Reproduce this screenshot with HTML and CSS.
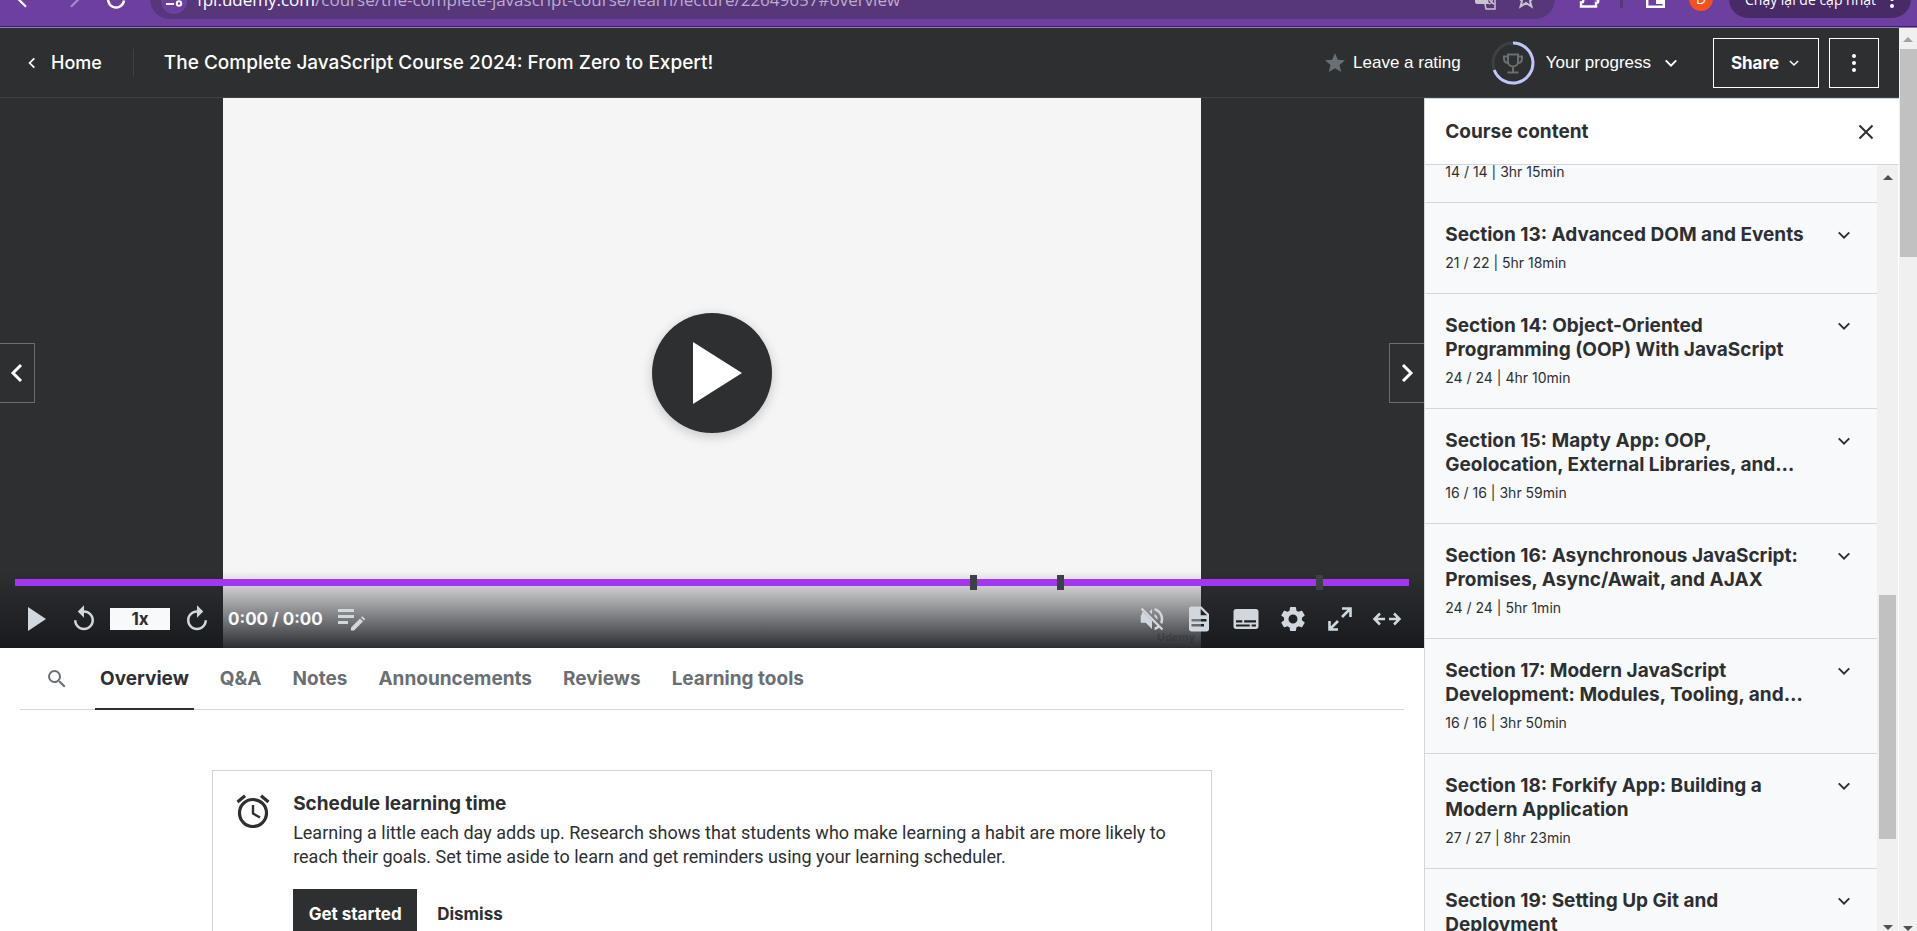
FILE: index.html
```html
<!DOCTYPE html>
<html lang="en">
<head>
<meta charset="utf-8">
<title>The Complete JavaScript Course 2024: From Zero to Expert!</title>
<link rel="stylesheet" href="styles.css">
</head>
<body>
<svg class="sprite" aria-hidden="true">
  <symbol id="chevron-down" viewBox="0 0 24 24"><path d="M5 8.5l7 7 7-7" fill="none" stroke="currentColor" stroke-width="2.6"/></symbol>
  <symbol id="chevron-left" viewBox="0 0 24 24"><path d="M16 4l-8 8 8 8" fill="none" stroke="currentColor" stroke-width="3"/></symbol>
  <symbol id="chevron-right" viewBox="0 0 24 24"><path d="M8 4l8 8-8 8" fill="none" stroke="currentColor" stroke-width="3"/></symbol>
  <symbol id="arrow-back" viewBox="0 0 24 24"><path d="M21 12H4M12 3.500l-8.500 8.500 8.500 8.500" fill="none" stroke="currentColor" stroke-width="2.400"/></symbol>
  <symbol id="star" viewBox="0 0 24 24"><path d="M12 17.270L18.180 21l-1.640-7.030L22 9.240l-7.190-.61L12 2 9.190 8.630 2 9.240l5.460 4.730L5.820 21z" fill="currentColor"/></symbol>
  <symbol id="replay" viewBox="0 0 24 24"><path d="M12 5V1L7 6l5 5V7c3.310 0 6 2.690 6 6s-2.690 6-6 6-6-2.690-6-6H4c0 4.420 3.580 8 8 8s8-3.580 8-8-3.580-8-8-8z" fill="currentColor"/></symbol>
</svg>

<header class="browser">
  <div class="toolbar">
    <button class="tool" aria-label="Back"><svg class="i22"><use href="#arrow-back"/></svg></button>
    <button class="tool tool-forward" aria-label="Forward"><svg class="i22 flip"><use href="#arrow-back"/></svg></button>
    <button class="tool" aria-label="Reload"><svg class="i22" viewBox="0 0 22 22"><path d="M18 7.500A8 8 0 1 0 19 12.500M19 2v6h-6" fill="none" stroke="currentColor" stroke-width="2.400"/></svg></button>
    <div class="omnibox">
      <button class="site" aria-label="Site information"><svg class="i18" viewBox="0 0 18 18"><g fill="none" stroke="currentColor" stroke-width="2"><circle cx="4" cy="5" r="2"/><path d="M8 5h9M1 14h8"/><circle cx="14" cy="13.500" r="2.200"/></g></svg></button>
      <span class="url"><b>fpi.udemy.com</b>/course/the-complete-javascript-course/learn/lecture/22649657#overview</span>
      <svg class="i22 mark" viewBox="0 0 22 22"><path d="M0 1h11l3 15H2a2 2 0 0 1-2-2z" fill="currentColor"/><path d="M12 5h8v16h-9l-1-5M13 9h6M14 9c0 4 3 6 5 7M18 9c0 3-2 6-4 7" fill="none" stroke="currentColor" stroke-width="1.500"/></svg>
      <svg class="i22 mark" viewBox="0 0 22 22"><path d="M5.500 18.500L7 13 2.500 9l6-.5L11 3l2.500 5.500 6 .5L15 13l1.500 5.500L11 15z" fill="none" stroke="currentColor" stroke-width="2"/></svg>
    </div>
    <button class="tool ext" aria-label="Extensions"><svg class="i22" viewBox="0 0 22 22"><path d="M3 18.500v-4c3 0 3-4 0-4V6h5c0-4 5-4 5 0h5v5c3 0 3 4 0 4v3.500z" fill="none" stroke="currentColor" stroke-width="2.400"/></svg></button>
    <span class="sep"></span>
    <button class="tool panel-tool" aria-label="Side panel"><svg class="i22" viewBox="0 0 22 22"><path d="M2.200 3.200h16.600v15.600H2.200z" fill="none" stroke="currentColor" stroke-width="2.400"/><path d="M11 3h8v13h-8z" fill="currentColor"/></svg></button>
    <span class="avatar">D</span>
    <button class="update"><span>Chạy lại để cập nhật</span><svg class="dots" viewBox="0 0 4 18"><g fill="currentColor"><circle cx="2" cy="2" r="2"/><circle cx="2" cy="9" r="2"/><circle cx="2" cy="16" r="2"/></g></svg></button>
  </div>
</header>

<div class="window">
  <div class="page">
    <header class="topbar">
      <a class="home" href="#"><svg class="i14"><use href="#chevron-left"/></svg>Home</a>
      <h1 class="course">The Complete JavaScript Course 2024: From Zero to Expert!</h1>
      <button class="rating"><svg class="i24"><use href="#star"/></svg>Leave a rating</button>
      <button class="progress">
        <svg class="ring" viewBox="0 0 44 44"><circle cx="22" cy="22" r="20" fill="none" stroke="#3e4143" stroke-width="3"/><path d="M22 2A20 20 0 1 1 3.200 29" fill="none" stroke="#c0c4fc" stroke-width="3"/><g fill="none" stroke="#6a6f73" stroke-width="2"><path d="M17 13.500h10v7a5 5 0 0 1-10 0zM17 15.500h-4v2c0 3 2 4.500 4.500 4.500M27 15.500h4v2c0 3-2 4.500-4.500 4.500M22 25.500V31M16.500 31.500h11"/></g></svg>
        Your progress
        <svg class="i18"><use href="#chevron-down"/></svg>
      </button>
      <button class="outlined share">Share<svg class="i14"><use href="#chevron-down"/></svg></button>
      <button class="outlined more" aria-label="More options"><svg class="dots" viewBox="0 0 4 18"><g fill="currentColor"><circle cx="2" cy="2" r="2"/><circle cx="2" cy="9" r="2"/><circle cx="2" cy="16" r="2"/></g></svg></button>
    </header>

    <div class="columns">
      <main class="content">
        <section class="video" aria-label="Video player">
          <div class="poster"><span class="watermark">Udemy</span></div>
          <button class="nav nav-prev" aria-label="Previous lecture"><svg class="i24"><use href="#chevron-left"/></svg></button>
          <button class="nav nav-next" aria-label="Next lecture"><svg class="i24"><use href="#chevron-right"/></svg></button>
          <button class="play-large" aria-label="Play video"><svg viewBox="0 0 120 120"><path d="M41 29l49 31-49 31z" fill="#fff"/></svg></button>
          <div class="player">
            <div class="track">
              <span class="cue" style="left:68.800%"></span>
              <span class="cue" style="left:75%"></span>
              <span class="cue" style="left:93.600%"></span>
            </div>
            <div class="controls">
              <button class="ctl" aria-label="Play"><svg class="i30" viewBox="0 0 30 30"><path d="M6 3l18 12L6 27z" fill="currentColor"/></svg></button>
              <button class="ctl" aria-label="Rewind"><svg class="i30"><use href="#replay"/></svg></button>
              <button class="speed">1x</button>
              <button class="ctl" aria-label="Forward"><svg class="i30 flip"><use href="#replay"/></svg></button>
              <span class="time">0:00 / 0:00</span>
              <button class="ctl" aria-label="Add note"><svg class="i30" viewBox="0 0 30 30"><path d="M2 5h16v3H2zM2 11h16v3H2zM2 17h10v3H2z" fill="currentColor"/><path d="M15 23.500L24 14.500l3 3-9 9h-3zM25 13.500l1.300-1.300 3 3L28 16.500z" fill="currentColor"/></svg></button>
              <span class="spacer"></span>
              <button class="ctl" aria-label="Unmute"><svg class="i30" viewBox="0 0 24 24"><path d="M3 9v6h4l5 5v-6.600L4.300 5.700 3.600 9zM12 4L9.900 6.100 12 8.200zM16.500 12A4.500 4.500 0 0 0 14 7.970v2.210l2.450 2.450c.03-.2.05-.41.05-.63zM19 12c0 .94-.2 1.820-.54 2.640l1.510 1.510A8.800 8.800 0 0 0 21 12c0-4.280-2.990-7.860-7-8.770v2.060c2.890.86 5 3.540 5 6.710zM4.270 3L3 4.270l13.250 13.250c-.67.52-1.420.93-2.250 1.180v2.060a9 9 0 0 0 3.690-1.810L19.730 21 21 19.730z" fill="currentColor"/></svg></button>
              <button class="ctl" aria-label="Transcript"><svg class="i30" viewBox="0 0 24 24"><path d="M14 2H6c-1.100 0-2 .9-2 2v16c0 1.100.9 2 2 2h12c1.100 0 2-.9 2-2V8zm2 16H6v-2h10zm2-4H6v-2h12zm-5-5V3.500L18.500 9z" fill="currentColor"/></svg></button>
              <button class="ctl" aria-label="Captions"><svg class="i30" viewBox="0 0 24 24"><path d="M20 4H4c-1.100 0-2 .9-2 2v12c0 1.100.9 2 2 2h16c1.100 0 2-.9 2-2V6c0-1.100-.9-2-2-2zM4 13h5v1.700H4zm11 5H4v-1.700h11zm5 0h-3.500v-1.700H20zm0-3.300h-9.500V13H20z" fill="currentColor"/></svg></button>
              <button class="ctl" aria-label="Settings"><svg class="i30" viewBox="0 0 24 24"><path d="M19.140 12.940c.04-.3.06-.61.06-.94 0-.32-.02-.64-.07-.94l2.030-1.580a.49.49 0 0 0 .12-.61l-1.920-3.320a.49.49 0 0 0-.59-.22l-2.390.96a7 7 0 0 0-1.620-.94l-.36-2.540A.48.48 0 0 0 13.920 2.400h-3.840a.47.47 0 0 0-.47.41l-.36 2.540c-.59.24-1.130.57-1.620.94l-2.390-.96a.48.48 0 0 0-.59.22L2.740 8.870a.47.47 0 0 0 .12.61l2.030 1.580c-.05.3-.09.63-.09.94s.02.64.07.94l-2.030 1.580a.49.49 0 0 0-.12.61l1.920 3.320c.12.22.37.29.59.22l2.390-.96c.5.38 1.030.7 1.620.94l.36 2.540c.05.24.24.41.48.41h3.840c.24 0 .44-.17.47-.41l.36-2.540c.59-.24 1.130-.56 1.620-.94l2.390.96c.22.080.47 0 .59-.22l1.920-3.320a.47.47 0 0 0-.12-.61zM12 15.600a3.600 3.600 0 1 1 0-7.200 3.600 3.600 0 0 1 0 7.200z" fill="currentColor"/></svg></button>
              <button class="ctl" aria-label="Full screen"><svg class="i30" viewBox="0 0 30 30"><path d="M17 4.500h8.500V13M25 5l-8 8M4.500 17v8.500H13M5 25l8-8" fill="none" stroke="currentColor" stroke-width="2.600"/></svg></button>
              <button class="ctl" aria-label="Expanded view"><svg class="i30" viewBox="0 0 30 30"><path d="M13 15H3.500M8 9.500L2.500 15 8 20.500M17 15h9.500M22 9.500l5.500 5.500-5.500 5.500" fill="none" stroke="currentColor" stroke-width="2.500"/></svg></button>
            </div>
          </div>
        </section>

        <nav class="tabs">
          <button class="search" aria-label="Search"><svg class="i24" viewBox="0 0 24 24"><path d="M15.500 14h-.79l-.28-.27A6.470 6.470 0 0 0 16 9.500 6.500 6.500 0 1 0 9.500 16c1.610 0 3.090-.59 4.230-1.570l.27.28v.79l5 4.990L20.490 19zm-6 0a4.500 4.500 0 1 1 0-9 4.500 4.500 0 0 1 0 9z" fill="currentColor"/></svg></button>
          <a class="tab tab-on" href="#overview">Overview</a>
          <a class="tab" href="#qa">Q&amp;A</a>
          <a class="tab" href="#notes">Notes</a>
          <a class="tab" href="#announcements">Announcements</a>
          <a class="tab" href="#reviews">Reviews</a>
          <a class="tab" href="#tools">Learning tools</a>
        </nav>

        <section class="card">
          <svg class="alarm" viewBox="0 0 34 34"><g fill="none" stroke="currentColor"><circle cx="17" cy="19" r="13.500" stroke-width="3.200"/><path d="M17 11v8.500l7 4" stroke-width="2.400"/><path d="M1.500 8L9 1.800M32.500 8L25 1.800" stroke-width="3.200"/></g></svg>
          <div class="card-body">
            <h2 class="card-title">Schedule learning time</h2>
            <p class="card-text">Learning a little each day adds up. Research shows that students who make learning a habit are more likely to reach their goals. Set time aside to learn and get reminders using your learning scheduler.</p>
            <div class="actions">
              <button class="primary">Get started</button>
              <button class="ghost">Dismiss</button>
            </div>
          </div>
        </section>
      </main>

      <aside class="sidebar">
        <div class="side-head">
          <h2 class="side-title">Course content</h2>
          <button class="close" aria-label="Close"><svg class="i16" viewBox="0 0 16 16"><path d="M1.500 1.500l13 13M14.500 1.500l-13 13" fill="none" stroke="currentColor" stroke-width="2"/></svg></button>
        </div>
        <div class="side-body">
          <div class="list">
            <div class="item item-cut"><p class="meta">14 / 14 | 3hr 15min</p></div>
            <div class="item"><div class="row"><h3 class="name">Section 13: Advanced DOM and Events</h3><button class="toggle" aria-label="Expand section 13"><svg class="i18"><use href="#chevron-down"/></svg></button></div><p class="meta">21 / 22 | 5hr 18min</p></div>
            <div class="item"><div class="row"><h3 class="name">Section 14: Object-Oriented<br>Programming (OOP) With JavaScript</h3><button class="toggle" aria-label="Expand section 14"><svg class="i18"><use href="#chevron-down"/></svg></button></div><p class="meta">24 / 24 | 4hr 10min</p></div>
            <div class="item"><div class="row"><h3 class="name">Section 15: Mapty App: OOP,<br>Geolocation, External Libraries, and…</h3><button class="toggle" aria-label="Expand section 15"><svg class="i18"><use href="#chevron-down"/></svg></button></div><p class="meta">16 / 16 | 3hr 59min</p></div>
            <div class="item"><div class="row"><h3 class="name">Section 16: Asynchronous JavaScript:<br>Promises, Async/Await, and AJAX</h3><button class="toggle" aria-label="Expand section 16"><svg class="i18"><use href="#chevron-down"/></svg></button></div><p class="meta">24 / 24 | 5hr 1min</p></div>
            <div class="item"><div class="row"><h3 class="name">Section 17: Modern JavaScript<br>Development: Modules, Tooling, and…</h3><button class="toggle" aria-label="Expand section 17"><svg class="i18"><use href="#chevron-down"/></svg></button></div><p class="meta">16 / 16 | 3hr 50min</p></div>
            <div class="item"><div class="row"><h3 class="name">Section 18: Forkify App: Building a<br>Modern Application</h3><button class="toggle" aria-label="Expand section 18"><svg class="i18"><use href="#chevron-down"/></svg></button></div><p class="meta">27 / 27 | 8hr 23min</p></div>
            <div class="item"><div class="row"><h3 class="name">Section 19: Setting Up Git and<br>Deployment</h3><button class="toggle" aria-label="Expand section 19"><svg class="i18"><use href="#chevron-down"/></svg></button></div></div>
          </div>
          <div class="scroll scroll-side"><i class="up"></i><span class="thumb"></span><i class="down"></i></div>
        </div>
      </aside>
    </div>
  </div>
  <div class="scroll scroll-page"><i class="up"></i><span class="thumb"></span><i class="down"></i></div>
</div>
</body>
</html>
```

FILE: styles.css
```css
* { box-sizing: border-box; }
body {
  margin: 0;
  height: 100vh;
  overflow: hidden;
  display: flex;
  flex-direction: column;
  background: #fff;
  color: #2d2f31;
  font-family: Inter, "Liberation Sans", sans-serif;
  font-size: 17px;
}
button {
  font: inherit;
  color: inherit;
  background: none;
  border: 0;
  padding: 0;
  display: flex;
  align-items: center;
  justify-content: center;
}
h1, h2, h3, p { margin: 0; }
a { color: inherit; text-decoration: none; }
svg { display: block; flex: none; }
.sprite { position: absolute; width: 0; height: 0; }
.i14 { width: 14px; height: 14px; }
.i16 { width: 16px; height: 16px; }
.i18 { width: 18px; height: 18px; }
.i22 { width: 22px; height: 22px; }
.i24 { width: 24px; height: 24px; }
.i30 { width: 30px; height: 30px; }
.flip { transform: scaleX(-1); }
.dots { width: 4px; height: 18px; }

/* Browser toolbar, scrolled partly out of view */
.browser {
  flex: none;
  height: 28px;
  overflow: hidden;
  background: #6d40a0;
  border-bottom: 1px solid #9a72c8;
  box-shadow: inset 0 -1px #3c2359;
  font-family: "Open Sans", "Noto Sans", sans-serif;
}
.toolbar {
  display: flex;
  align-items: center;
  height: 40px;
  margin-top: -21px;
  padding: 0 6px 0 15px;
  color: #fff;
}
.tool { width: 22px; margin-right: 23px; }
.tool-forward { color: #a88bc8; }
.omnibox {
  flex: 1;
  display: flex;
  align-items: center;
  gap: 10px;
  height: 40px;
  margin-right: 23px;
  padding: 0 18px 0 11px;
  border-radius: 20px;
  background: #573779;
}
.mark { color: #c9c3cf; margin-left: 8px; }
.site { width: 26px; height: 30px; border-radius: 15px; background: #6d40a0; }
.url { flex: 1; font-size: 17px; color: #bcaccc; white-space: nowrap; }
.url b { font-weight: 400; color: #fff; }
.ext { margin-right: 20px; }
.sep { width: 3px; height: 18px; margin-right: 22px; background: #573779; }
.panel-tool { margin-right: 22px; }
.avatar {
  width: 24px;
  height: 24px;
  margin-right: 16px;
  border-radius: 50%;
  background: #f4511e;
  font-size: 14px;
  line-height: 24px;
  text-align: center;
}
.update {
  height: 38px;
  width: 182px;
  justify-content: space-between;
  padding: 0 17px 0 16px;
  border-radius: 19px;
  background: #472a66;
  font-size: 14px;
}

.window { flex: 1; min-height: 0; display: flex; }
.page { flex: 1; min-width: 0; display: flex; flex-direction: column; }

/* Course header */
.topbar {
  flex: none;
  display: flex;
  align-items: center;
  height: 70px;
  padding: 0 20px 0 25px;
  background: #2d2f31;
  border-bottom: 1px solid #3e4143;
  color: #fff;
}
.home {
  display: flex;
  align-items: center;
  gap: 12px;
  height: 28px;
  padding-right: 31px;
  border-right: 1px solid #3e4143;
  font-size: 18px;
  font-weight: 500;
}
.course { flex: 1; margin-left: 30px; font-size: 19px; font-weight: 500; }
.rating, .progress { font-family: "Liberation Sans", Arial, sans-serif; }
.rating { gap: 6px; margin-right: 30px; }
.rating .i24 { color: #6a6f73; }
.progress { gap: 11px; margin-right: 33px; }
.ring { width: 44px; height: 44px; }
.outlined { height: 50px; border: 1px solid #fff; font-weight: 700; }
.share { width: 106px; gap: 8px; margin-right: 10px; }
.more { width: 50px; }

.columns { flex: 1; min-height: 0; display: flex; }
.content { flex: 1; min-width: 0; }

/* Video player */
.video { position: relative; aspect-ratio: 1424 / 550; background: #2d2f31; }
.poster {
  display: flex;
  align-items: flex-end;
  justify-content: flex-end;
  height: 100%;
  aspect-ratio: 16 / 9;
  margin: 0 auto;
  padding: 4px 6px;
  background: #f5f5f5;
}
.watermark { color: #bbb; font-size: 11px; font-weight: 700; }
.nav {
  position: absolute;
  top: calc(50% - 30px);
  width: 35px;
  height: 60px;
  border: 1px solid #6a6f73;
  background: #2d2f31;
  color: #fff;
}
.nav-prev { left: 0; border-left: 0; }
.nav-next { right: 0; border-right: 0; }
.play-large {
  position: absolute;
  top: calc(50% - 60px);
  left: calc(50% - 60px);
  width: 120px;
  height: 120px;
  border-radius: 50%;
  background: #2d2f31;
  box-shadow: 0 3px 12px rgba(0, 0, 0, .2);
}
.player {
  position: absolute;
  left: 0;
  right: 0;
  bottom: 0;
  padding: 8px 15px 0;
  background: linear-gradient(rgba(22, 24, 29, 0), rgba(22, 24, 29, .9));
}
.track { position: relative; height: 7px; background: #a435f0; }
.cue { position: absolute; top: -4px; width: 7px; height: 15px; margin-left: -4px; background: #3e4143; }
.controls {
  display: flex;
  align-items: center;
  height: 62px;
  margin-right: -1px;
  padding-top: 4px;
  color: #d1d7dc;
}
.ctl { width: 47px; height: 48px; }
.controls .ctl:first-child { width: 43px; margin-right: 2px; }
.speed { width: 60px; height: 22px; margin: 0 3px; background: #f7f9fa; color: #2d2f31; font-weight: 700; }
.time { color: #f7f9fa; font-weight: 700; margin: 0 5px 0 8px; }
.spacer { flex: 1; }

/* Tabs */
.tabs {
  display: flex;
  gap: 21px;
  height: 62px;
  margin: 0 20px;
  border-bottom: 1px solid #d1d7dc;
  color: #6a6f73;
  font-size: 19px;
  font-weight: 700;
}
.search { width: 54px; padding-left: 20px; }
.tab { height: 62px; padding: 0 5px; line-height: 62px; }
.tab-on { color: #2d2f31; border-bottom: 2px solid #2d2f31; }

/* Scheduling card */
.card {
  display: flex;
  gap: 23px;
  width: 1000px;
  max-width: 100%;
  margin: 60px auto 0;
  padding: 21px 24px 20px 23px;
  border: 1px solid #d1d2e0;
}
.alarm { width: 34px; height: 34px; margin-top: 2px; }
.card-title { font-size: 19px; line-height: 24px; }
.card-text {
  max-width: 880px;
  margin-top: 5px;
  font-family: Roboto, "Liberation Sans", sans-serif;
  font-size: 18px;
  line-height: 24px;
}
.actions { display: flex; margin-top: 20px; font-weight: 700; }
.primary { height: 50px; width: 124px; background: #2d2f31; color: #fff; }
.ghost { height: 50px; padding: 0 20px; }

/* Course content */
.sidebar {
  flex: none;
  width: 25%;
  display: flex;
  flex-direction: column;
  border-left: 1px solid #d1d7dc;
}
.side-head {
  flex: none;
  display: flex;
  align-items: center;
  justify-content: space-between;
  height: 67px;
  padding: 0 25px 0 20px;
  border: solid #d1d7dc;
  border-width: 1px 0;
}
.side-title { font-size: 19px; line-height: 24px; }
.side-body { flex: 1; min-height: 0; display: flex; background: #f7f9fa; }
.list { flex: 1; min-width: 0; overflow: hidden; }
.item { padding: 20px 24px 20px 20px; border-bottom: 1px solid #d1d7dc; }
.item-cut { margin-top: -4px; padding-top: 0; }
.row { display: flex; align-items: flex-start; justify-content: space-between; }
.name { font-size: 19px; line-height: 24px; white-space: nowrap; }
.toggle { height: 24px; }
.meta { margin-top: 5px; font-size: 14px; line-height: 21px; }
.item-cut .meta { margin-top: 0; }

/* Scroll bars */
.scroll {
  flex: none;
  display: flex;
  flex-direction: column;
  align-items: center;
  background: #f0f0f0;
}
.thumb { width: 17px; background: #c1c1c1; }
.up, .down { border: 5px solid transparent; border-top: 0; border-bottom: 5px solid #505050; }
.down { margin-top: auto; transform: scaleY(-1); }
.scroll-side { width: 22px; padding: 10px 0 1px; border-right: 1px solid #fff; }
.scroll-side .thumb { height: 244px; margin-top: 415px; }
.scroll-page { width: 18px; padding: 9px 0 0; }
.scroll-page .up { border-bottom-color: #a3a3a3; }
.scroll-page .thumb { align-self: flex-end; height: 208px; margin-top: 7px; }
```
